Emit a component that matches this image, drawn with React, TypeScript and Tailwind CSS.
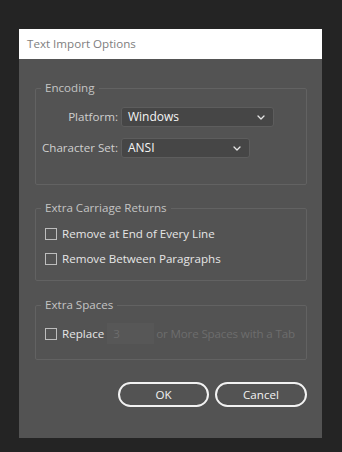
import React from 'react'

const font = {fontFamily: '"Segoe UI", "Open Sans", "Noto Sans", sans-serif'}

const Chevron = () => (
  <svg width="8" height="5" viewBox="0 0 8 5" fill="none" className="shrink-0">
    <path d="M1 1l3 3 3-3" stroke="#e6e6e6" strokeWidth="1.3" strokeLinecap="round" strokeLinejoin="round" />
  </svg>
)

const Select = ({value, width}: {value: string; width: string}) => (
  <div
    className={`flex h-[20px] items-center justify-between rounded-[3px] border border-[#5d5d5d] bg-[#464646] pl-[6px] pr-[8px] text-[12px] text-[#f5f5f5] ${width}`}
  >
    <span>{value}</span>
    <Chevron />
  </div>
)

const Checkbox = () => <div className="h-[12px] w-[12px] shrink-0 border border-[#bdbdbd]" />

const Group = ({title, className, children}: {title: string; className: string; children: React.ReactNode}) => (
  <fieldset className={`rounded-[2px] border border-[#626262] ${className}`}>
    <legend className="ml-[5px] px-[4px] text-[11.6px] leading-[14px] text-[#c4c4c4]">{title}</legend>
    {children}
  </fieldset>
)

export default function App() {
  return (
    <div className="h-[452px] w-[342px] bg-[#242424] pl-[19px] pt-[29px]" style={font}>
      <div className="flex h-[409px] w-[303px] flex-col bg-[#535353]">
        <div className="flex h-[30px] items-center bg-white px-[8px] text-[11.6px] text-[#7e7e7e]">
          Text Import Options
        </div>

        <div className="flex flex-col pl-[16px] pr-[15px] pt-[22px]">
          <Group title="Encoding" className="h-[104px]">
            <div className="flex flex-col gap-[11px] pt-[12px]">
              <div className="flex items-center">
                <span className="w-[85px] whitespace-nowrap pr-[3px] text-right text-[11.6px] text-[#cfcfcf]">Platform:</span>
                <Select value="Windows" width="w-[153px]" />
              </div>
              <div className="flex items-center">
                <span className="w-[85px] whitespace-nowrap pr-[3px] text-right text-[11.6px] text-[#cfcfcf]">Character Set:</span>
                <Select value="ANSI" width="w-[129px]" />
              </div>
            </div>
          </Group>

          <Group title="Extra Carriage Returns" className="mt-[16px] h-[80px]">
            <div className="flex flex-col gap-[11px] pl-[9px] pt-[12px] text-[11.6px] text-[#e6e6e6]">
              <div className="flex h-[14px] items-center gap-[5px]">
                <Checkbox />
                <span>Remove at End of Every Line</span>
              </div>
              <div className="flex h-[14px] items-center gap-[5px]">
                <Checkbox />
                <span>Remove Between Paragraphs</span>
              </div>
            </div>
          </Group>

          <Group title="Extra Spaces" className="mt-[17px] h-[62px]">
            <div className="flex items-center whitespace-nowrap pl-[9px] pt-[11px] text-[11.6px]">
              <Checkbox />
              <span className="ml-[5px] text-[#e6e6e6]">Replace</span>
              <div className="ml-[3px] flex h-[21px] w-[47px] items-center bg-[#575757] pl-[6px] text-[#6d6d6d]">3</div>
              <span className="ml-[2px] tracking-[-0.15px] text-[#6d6d6d]">or More Spaces with a Tab</span>
            </div>
          </Group>

          <div className="mt-[22px] flex justify-end gap-[6px]">
            <button className="h-[25px] w-[91px] rounded-full border-2 border-[#f2f2f2] text-[11.6px] text-[#f2f2f2]">
              OK
            </button>
            <button className="h-[25px] w-[92px] rounded-full border-2 border-[#f2f2f2] text-[11.6px] text-[#f2f2f2]">
              Cancel
            </button>
          </div>
        </div>
      </div>
    </div>
  )
}
